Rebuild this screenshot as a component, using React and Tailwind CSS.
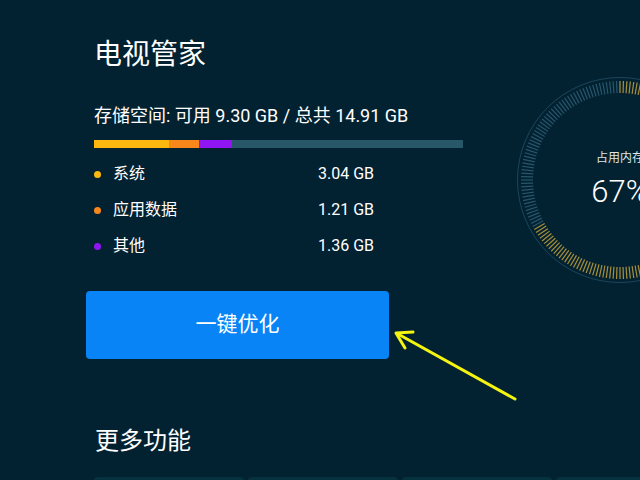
import React from "react";

const FONT = { fontFamily: 'Roboto, "Noto Sans CJK SC", sans-serif' };

const segments = [
  { label: "系统", value: "3.04 GB", color: "bg-[#fcb80f]", width: "w-[75px]" },
  { label: "应用数据", value: "1.21 GB", color: "bg-[#f7861b]", width: "w-[30px]" },
  { label: "其他", value: "1.36 GB", color: "bg-[#8f16f2]", width: "w-[33px]" },
];

// dial: 180 ticks, the first 67% painted gold
const Gauge = () => {
  const cx = 105;
  const cy = 105;
  const ticks = [];
  for (let i = 0; i < 180; i++) {
    const a = (i * 2 * Math.PI) / 180;
    const s = Math.sin(a);
    const c = Math.cos(a);
    ticks.push(
      <line
        key={i}
        x1={cx + 87 * s}
        y1={cy - 87 * c}
        x2={cx + 99 * s}
        y2={cy - 99 * c}
        stroke={i * 2 < 241 ? "#a98f3a" : "#27566c"}
        strokeWidth="1.2"
      />
    );
  }
  return (
    <div className="relative w-[210px] h-[210px]">
      <svg width="210" height="210" viewBox="0 0 210 210">
        <circle cx={cx} cy={cy} r="102.5" fill="none" stroke="#1b465b" strokeWidth="1" />
        {ticks}
      </svg>
      <div className="absolute inset-0 flex flex-col items-center pt-[75px]">
        <span className="text-[12px] leading-[16px] text-[#dfe6ea]">占用内存</span>
        <span className="mt-2 text-[31px] leading-[36px] font-light">67%</span>
      </div>
    </div>
  );
};

const App = () => {
  return (
    <div className="relative w-[640px] h-[480px] overflow-hidden bg-[#032231] text-white" style={FONT}>
      <div className="flex pl-[94px] pt-[37px]">
        <div className="w-[369px] shrink-0 flex flex-col">
          <h1 className="text-[28px] leading-[36px]">电视管家</h1>
          <p className="mt-[31px] text-[18px] leading-[24px] whitespace-nowrap">
            存储空间: 可用 9.30 GB / 总共 14.91 GB
          </p>
          <div className="mt-3 h-2 flex bg-[#29576a]">
            {segments.map((s) => (
              <div key={s.label} className={`${s.color} ${s.width} h-full`} />
            ))}
          </div>
          <ul className="mt-2">
            {segments.map((s) => (
              <li key={s.label} className="h-9 flex items-center text-[16px]">
                <span className={`w-[7px] h-[7px] rounded-full ${s.color}`} />
                <span className="ml-3 w-[205px]">{s.label}</span>
                <span>{s.value}</span>
              </li>
            ))}
          </ul>
          <button className="-ml-2 mt-[27px] w-[303px] h-[68px] rounded bg-[#0984f7] text-[21px] text-white">
            一键优化
          </button>
        </div>
        <div className="ml-[52px] mt-[38px] shrink-0">
          <Gauge />
        </div>
      </div>

      <h2 className="pl-[95px] mt-[67px] text-[24px] leading-[30px]">更多功能</h2>

      <div className="flex gap-1 pl-[94px] mt-[21px]">
        {[0, 1, 2, 3].map((i) => (
          <div key={i} className="w-[150px] h-24 shrink-0 rounded-sm bg-[#063240]" />
        ))}
      </div>

      {/* annotation arrow */}
      <svg className="absolute inset-0 pointer-events-none" width="640" height="480">
        <line x1="515" y1="399" x2="398" y2="334" stroke="#f4f410" strokeWidth="3" strokeLinecap="round" />
        <polyline
          points="413,332 396,333 405,348"
          fill="none"
          stroke="#f4f410"
          strokeWidth="3"
          strokeLinecap="round"
          strokeLinejoin="round"
        />
      </svg>
    </div>
  );
};

export default App;
